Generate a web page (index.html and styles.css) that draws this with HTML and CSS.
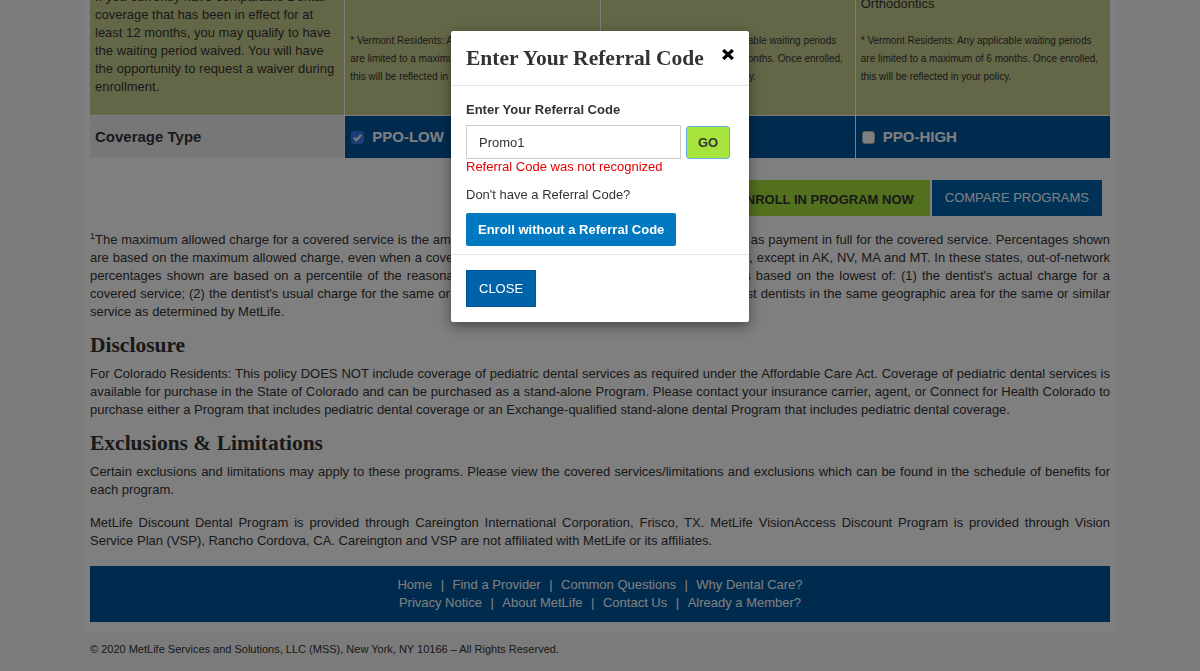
FILE: index.html
```html
<!DOCTYPE html>
<html lang="en">
<head>
<meta charset="utf-8">
<title>MetLife Dental Programs</title>
<link rel="stylesheet" href="styles.css">
</head>
<body>
<div class="page">
  <div class="compare">
    <div class="cell cell-feature">
      <p>If you currently have comparable Dental coverage that has been in effect for at least 12 months, you may qualify to have the waiting period waived. You will have the opportunity to request a waiver during enrollment.</p>
    </div>
    <div class="cell">
      <p class="note">* Vermont Residents: Any applicable waiting periods are limited to a maximum of 6 months. Once enrolled, this will be reflected in your policy.</p>
    </div>
    <div class="cell">
      <p class="note">* Vermont Residents: Any applicable waiting periods are limited to a maximum of 6 months. Once enrolled, this will be reflected in your policy.</p>
    </div>
    <div class="cell">
      <p class="service">Orthodontics</p>
      <p class="note">* Vermont Residents: Any applicable waiting periods are limited to a maximum of 6 months. Once enrolled, this will be reflected in your policy.</p>
    </div>
    <div class="type-label">Coverage Type</div>
    <div class="type-option"><span class="check checked"><svg width="13" height="13" viewBox="0 0 13 13"><polyline points="3,6.8 5.5,9.3 10,3.8" fill="none" stroke="#fff" stroke-width="2"/></svg></span>PPO-Low</div>
    <div class="type-option"><span class="check"></span>PPO-Mid</div>
    <div class="type-option"><span class="check"></span>PPO-High</div>
  </div>

  <div class="actions">
    <a class="btn btn-enroll" href="#">Enroll in Program Now</a>
    <a class="btn btn-compare" href="#">Compare Programs</a>
  </div>

  <p class="text footnote"><sup>1</sup>The maximum allowed charge for a covered service is the amount that in-network dentists have agreed to accept as payment in full for the covered service. Percentages shown are based on the maximum allowed charge, even when a covered service is provided by an out-of-network dentist, except in AK, NV, MA and MT. In these states, out-of-network percentages shown are based on a percentile of the reasonable and customary charge (R&amp;C). The R&amp;C fee is based on the lowest of: (1) the dentist's actual charge for a covered service; (2) the dentist's usual charge for the same or similar service; or (3) the reasonable charge of most dentists in the same geographic area for the same or similar service as determined by MetLife.</p>

  <h2 class="heading">Disclosure</h2>
  <p class="text">For Colorado Residents: This policy DOES NOT include coverage of pediatric dental services as required under the Affordable Care Act. Coverage of pediatric dental services is available for purchase in the State of Colorado and can be purchased as a stand-alone Program. Please contact your insurance carrier, agent, or Connect for Health Colorado to purchase either a Program that includes pediatric dental coverage or an Exchange-qualified stand-alone dental Program that includes pediatric dental coverage.</p>

  <h2 class="heading">Exclusions &amp; Limitations</h2>
  <p class="text">Certain exclusions and limitations may apply to these programs. Please view the covered services/limitations and exclusions which can be found in the schedule of benefits for each program.</p>
  <p class="text text-spaced">MetLife Discount Dental Program is provided through Careington International Corporation, Frisco, TX. MetLife VisionAccess Discount Program is provided through Vision Service Plan (VSP), Rancho Cordova, CA. Careington and VSP are not affiliated with MetLife or its affiliates.</p>

  <footer class="site-footer">
    <div><a href="#">Home</a><span class="sep">|</span><a href="#">Find a Provider</a><span class="sep">|</span><a href="#">Common Questions</a><span class="sep">|</span><a href="#">Why Dental Care?</a></div>
    <div><a href="#">Privacy Notice</a><span class="sep">|</span><a href="#">About MetLife</a><span class="sep">|</span><a href="#">Contact Us</a><span class="sep">|</span><a href="#">Already a Member?</a></div>
  </footer>
</div>
<p class="legal">© 2020 MetLife Services and Solutions, LLC (MSS), New York, NY 10166 – All Rights Reserved.</p>

<div class="backdrop"></div>
<div class="modal">
  <div class="modal-header">
    <h4 class="modal-title">Enter Your Referral Code</h4>
    <span class="modal-x"><svg width="12" height="11" viewBox="0 0 12 11"><path d="M1.2 1 L10.8 10 M10.8 1 L1.2 10" stroke="#000" stroke-width="3.2" fill="none"/></svg></span>
  </div>
  <div class="modal-body">
    <label class="field-label">Enter Your Referral Code</label>
    <div class="code-row">
      <input class="code-input" type="text" value="Promo1">
      <button class="go-btn">GO</button>
    </div>
    <div class="error">Referral Code was not recognized</div>
    <div class="question">Don't have a Referral Code?</div>
    <a class="no-code-btn" href="#">Enroll without a Referral Code</a>
  </div>
  <div class="modal-footer">
    <button class="close-btn">CLOSE</button>
  </div>
</div>
</body>
</html>
```

FILE: styles.css
```css
* { box-sizing: border-box; }
html, body { margin: 0; }
body {
  background: #f6f6f6;
  font-family: "Liberation Sans", Arial, sans-serif;
  color: #333;
  font-size: 13px;
  line-height: 18px;
}
.page {
  width: 1034px;
  margin: -20px auto 0;
  padding: 0 7px 10px;
  background: #fff;
}
.compare {
  display: grid;
  grid-template-columns: repeat(4, 1fr);
  gap: 1px;
}
.cell {
  background: #c8cf8f;
  padding: 8px 5px 29px;
  display: flex;
  flex-direction: column;
}
.cell p { margin: 0; }
.cell-feature { padding-bottom: 8px; }
.cell .note {
  margin-top: auto;
  font-size: 10px;
  line-height: 18px;
}
.cell .service { margin-top: 7px; margin-bottom: 19px; }
.type-label {
  background: #eeeeee;
  height: 42px;
  display: flex;
  align-items: center;
  padding: 0 5px;
  font-weight: bold;
  font-size: 15px;
}
.type-option {
  background: #00579e;
  color: #fff;
  display: flex;
  align-items: center;
  padding: 0 6px;
  font-weight: bold;
  font-size: 15px;
  text-transform: uppercase;
}
.check {
  width: 13px;
  height: 13px;
  margin-right: 8px;
  border-radius: 3px;
  background: #fff;
  border: 1px solid #b9b9b9;
  display: inline-flex;
}
.check.checked {
  background: #3a7ff0;
  border-color: #3a7ff0;
}
.check.checked svg { margin: -1px; }

.actions {
  display: flex;
  justify-content: flex-end;
  gap: 2px;
  margin: 22px 8px 0 0;
}
.btn {
  height: 36px;
  display: flex;
  align-items: center;
  padding: 0 13px;
  font-size: 13px;
  text-transform: uppercase;
  text-decoration: none;
}
.btn-enroll {
  background: #a6e13d;
  color: #333;
  font-weight: bold;
  padding: 3px 16px 0;
}
.btn-compare {
  background: #0065b0;
  color: #fff;
}

.text {
  margin: 0;
  text-align: justify;
}
.footnote { margin-top: 15px; }
.footnote sup { font-size: 9px; line-height: 0; }
.text-spaced { margin-top: 15px; }
.heading {
  font-family: "Liberation Serif", Georgia, serif;
  font-weight: bold;
  font-size: 21.5px;
  line-height: 24px;
  margin: 12px 0 8px;
  color: #333;
}

.site-footer {
  margin-top: 16px;
  background: #00579e;
  padding: 10px 0;
  text-align: center;
  color: #fff;
}
.site-footer a { color: #fff; text-decoration: none; }
.sep { margin: 0 8.5px; }

.legal {
  width: 1020px;
  margin: 9px auto 0;
  font-size: 11px;
  line-height: 16px;
}

.backdrop {
  position: fixed;
  inset: 0;
  background: rgba(0, 0, 0, 0.5);
}
.modal {
  position: fixed;
  top: 31px;
  left: 50%;
  margin-left: -149px;
  width: 298px;
  background: #fff;
  border-radius: 2px;
  box-shadow: 0 4px 14px rgba(0, 0, 0, 0.45);
}
.modal-header {
  display: flex;
  justify-content: space-between;
  align-items: flex-start;
  padding: 15px;
  border-bottom: 1px solid #e5e5e5;
}
.modal-title {
  margin: 0;
  font-family: "Liberation Serif", Georgia, serif;
  font-weight: bold;
  font-size: 21.5px;
  line-height: 24px;
  color: #333;
}
.modal-x { display: flex; margin-top: 3px; }
.modal-body { padding: 15px 15px 8px; }
.field-label {
  display: block;
  font-weight: bold;
  margin-bottom: 6px;
}
.code-row { display: flex; gap: 5px; align-items: flex-start; }
.code-input {
  width: 215px;
  height: 34px;
  border: 1px solid #ccc;
  padding: 0 12px;
  font-family: inherit;
  font-size: 13px;
  color: #333;
  border-radius: 0;
  outline: none;
}
.go-btn {
  width: 44px;
  height: 33px;
  margin-top: 1px;
  background: #a6e33c;
  border: 1px solid #66afe9;
  border-radius: 3px;
  font-family: inherit;
  font-weight: bold;
  font-size: 13px;
  color: #333;
  padding: 0;
}
.error {
  color: #e60000;
  line-height: 16px;
}
.question { margin-top: 11px; }
.no-code-btn {
  display: inline-flex;
  align-items: center;
  margin-top: 9px;
  height: 33px;
  padding: 0 12px;
  background: #0079c1;
  color: #fff;
  font-weight: bold;
  text-decoration: none;
  border-radius: 2px;
}
.modal-footer {
  border-top: 1px solid #e5e5e5;
  padding: 15px;
}
.close-btn {
  height: 37px;
  padding: 0 12px;
  background: #0062a9;
  border: 1px solid #00539a;
  color: #fff;
  font-family: inherit;
  font-size: 13px;
  border-radius: 0;
}
```
